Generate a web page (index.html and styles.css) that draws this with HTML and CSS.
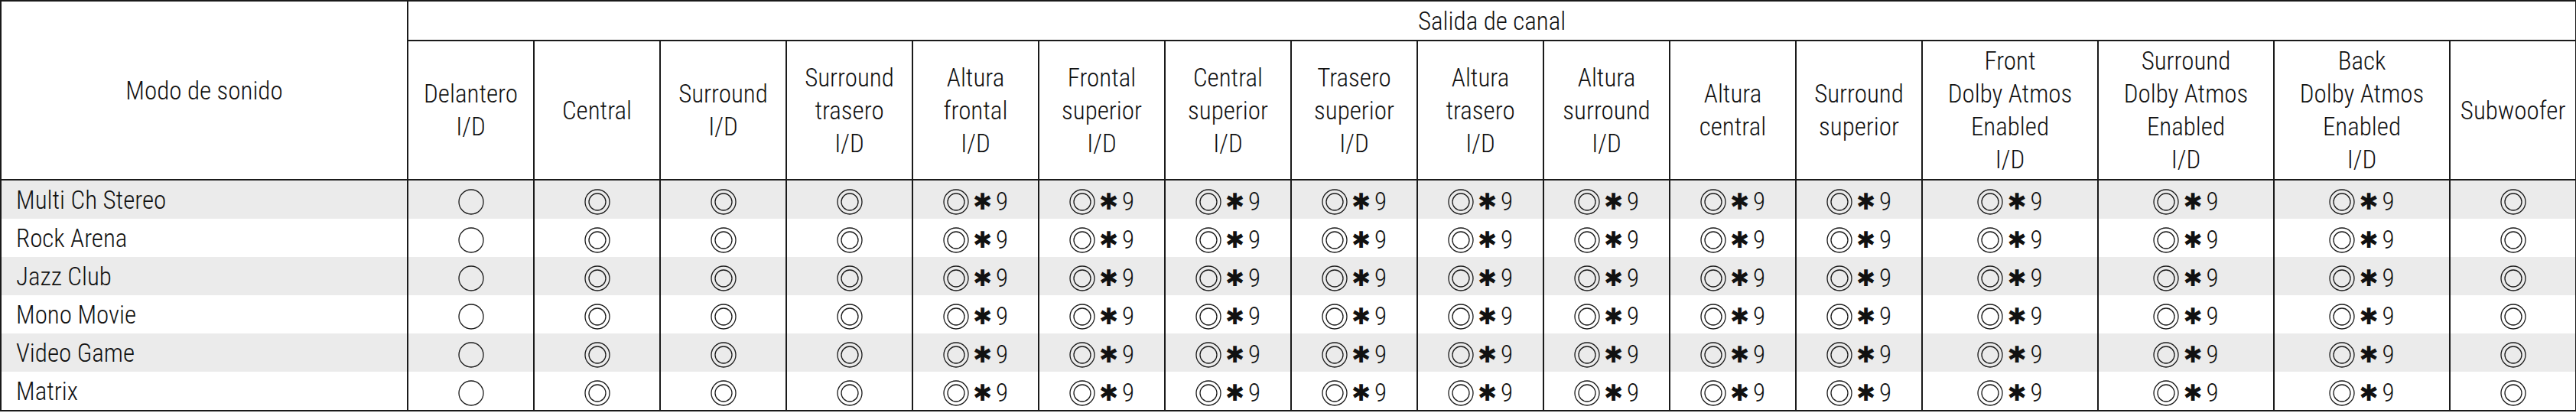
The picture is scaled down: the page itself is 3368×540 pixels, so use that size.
FILE: index.html
```html
<!DOCTYPE html>
<html lang="es">
<head>
<meta charset="utf-8">
<title>Modo de sonido - Salida de canal</title>
<link rel="stylesheet" href="styles.css">
</head>
<body>
<svg class="defs" width="0" height="0" aria-hidden="true">
  <symbol id="sc" viewBox="0 0 34 34"><circle cx="17" cy="17" r="16" fill="none" stroke="#1a1a1a" stroke-width="1.3"/></symbol>
  <symbol id="dc" viewBox="0 0 34 34"><circle cx="17" cy="17" r="16" fill="none" stroke="#1a1a1a" stroke-width="1.3"/><circle cx="17" cy="17" r="11" fill="none" stroke="#1a1a1a" stroke-width="1.3"/></symbol>
</svg>
<table class="grid">
  <colgroup>
    <col class="c-mode">
    <col class="c-std"><col class="c-std"><col class="c-std"><col class="c-std">
    <col class="c-std"><col class="c-std"><col class="c-std"><col class="c-std">
    <col class="c-std"><col class="c-std"><col class="c-std"><col class="c-std">
    <col class="c-wide"><col class="c-wide"><col class="c-wide">
    <col class="c-std">
  </colgroup>
  <thead>
    <tr class="r1">
      <th rowspan="2" class="mode-head">Modo de sonido</th>
      <th colspan="16">Salida de canal</th>
    </tr>
    <tr class="r2">
      <th>Delantero<br>I/D</th>
      <th>Central</th>
      <th>Surround<br>I/D</th>
      <th>Surround<br>trasero<br>I/D</th>
      <th>Altura<br>frontal<br>I/D</th>
      <th>Frontal<br>superior<br>I/D</th>
      <th>Central<br>superior<br>I/D</th>
      <th>Trasero<br>superior<br>I/D</th>
      <th>Altura<br>trasero<br>I/D</th>
      <th>Altura<br>surround<br>I/D</th>
      <th>Altura<br>central</th>
      <th>Surround<br>superior</th>
      <th>Front<br>Dolby Atmos<br>Enabled<br>I/D</th>
      <th>Surround<br>Dolby Atmos<br>Enabled<br>I/D</th>
      <th>Back<br>Dolby Atmos<br>Enabled<br>I/D</th>
      <th>Subwoofer</th>
    </tr>
  </thead>
  <tbody id="body"></tbody>
</table>
<script src="script.js"></script>
</body>
</html>
```
FILE: script.js
```js
(function () {
  var modes = ["Multi Ch Stereo", "Rock Arena", "Jazz Club", "Mono Movie", "Video Game", "Matrix"];
  // s = single circle, d = double circle, n = double circle with note *9
  var pattern = ["s", "d", "d", "d", "n", "n", "n", "n", "n", "n", "n", "n", "n", "n", "n", "d"];
  function icon(id) {
    return '<svg class="ico" viewBox="0 0 34 34"><use href="#' + id + '"/></svg>';
  }
  var html = "";
  modes.forEach(function (m) {
    html += '<tr><td class="mode">' + m + "</td>";
    pattern.forEach(function (p) {
      if (p === "s") html += '<td><span class="sym">' + icon("sc") + "</span></td>";
      else if (p === "d") html += '<td><span class="sym">' + icon("dc") + "</span></td>";
      else html += '<td><span class="sym">' + icon("dc") + '<span class="ast">\u2731</span><span class="num">9</span></span></td>';
    });
    html += "</tr>";
  });
  document.getElementById("body").innerHTML = html;
})();
```
FILE: styles.css
```css
html, body {
  margin: 0;
  padding: 0;
  background: #ffffff;
}
body {
  font-family: "Roboto", "Noto Sans", "Liberation Sans", sans-serif;
  font-stretch: 75%;
  font-weight: 300;
  color: #111111;
}
.defs {
  display: block;
  width: 0;
  height: 0;
  overflow: hidden;
}
.grid {
  border-collapse: collapse;
  table-layout: fixed;
  width: 3368px;
  border: 2px solid #1a1a1a;
}
.c-mode { width: 532px; }
.c-std { width: 165px; }
.c-wide { width: 230px; }
.grid th,
.grid td {
  border: 2px solid #1a1a1a;
  padding: 0;
  font-weight: 300;
  font-size: 33px;
  line-height: 43px;
  text-align: center;
  vertical-align: middle;
}
.r1 th { height: 50px; }
.r2 th { height: 180px; }
.grid tbody td {
  border-top: none;
  border-bottom: none;
  height: 50px;
}
.grid tbody tr:nth-child(odd) td {
  background: #ebebeb;
}
.grid tbody tr:first-child td { border-top: 2px solid #1a1a1a; }
.grid tbody tr:last-child td { border-bottom: 2px solid #1a1a1a; }
.grid td.mode {
  text-align: left;
  padding-left: 19px;
}
.sym {
  display: inline-flex;
  align-items: center;
  vertical-align: middle;
}
.ico {
  width: 34px;
  height: 34px;
  display: block;
}
.ast {
  font-family: "DejaVu Sans", sans-serif;
  font-stretch: normal;
  font-weight: bold;
  font-size: 30px;
  line-height: 1;
  margin-left: 5px;
  color: #111111;
}
.num {
  font-size: 33px;
  line-height: 1;
  margin-left: 5px;
}
```
